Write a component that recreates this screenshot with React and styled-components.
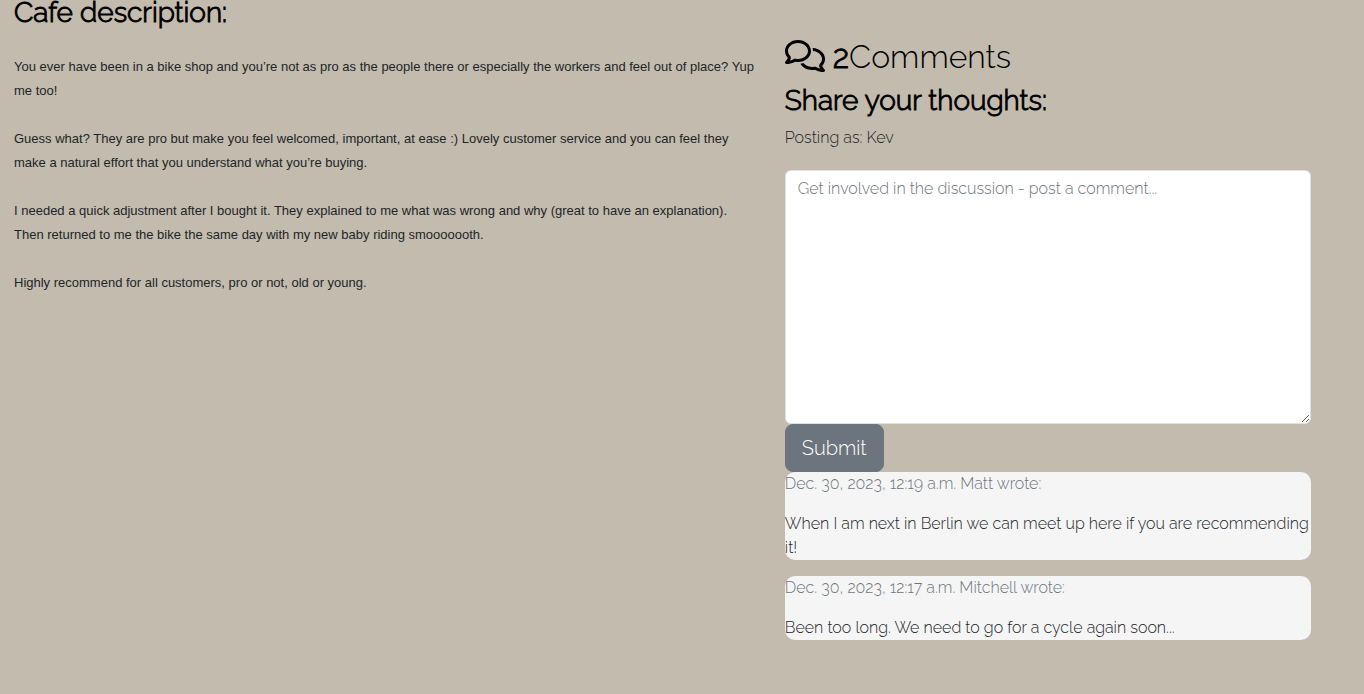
import React from "react";
import styled, { createGlobalStyle } from "styled-components";
import { FaRegComments } from "react-icons/fa6";

const GlobalStyle = createGlobalStyle`
  *, *::before, *::after { box-sizing: border-box; }
  body {
    margin: 0;
    background: #c3bbad;
    color: #212529;
    font-family: Raleway, Lato, "Open Sans", sans-serif;
    font-size: 16px;
    font-weight: 300;
    line-height: 24px;
  }
`;

const Page = styled.main`
  display: grid;
  grid-template-columns: 24fr 17fr;
  column-gap: 28px;
  min-height: 100vh;
  padding: 0 53px 54px 14px;
`;

const Description = styled.section`
  min-width: 0;
`;

const Discussion = styled.section`
  min-width: 0;
  padding-top: 38px;
`;

const Heading = styled.h3`
  margin: 0 0 8px;
  color: #000;
  font-size: 28px;
  font-weight: 300;
  line-height: 34px;
  -webkit-text-stroke: 1px #000;
`;

const DescriptionHeading = styled(Heading)`
  margin: 0 0 29px;
  line-height: 26px;
`;

const Paragraph = styled.p`
  margin: 0 0 24px;
  font-family: "Liberation Sans", Arial, sans-serif;
  font-size: 13px;
  font-weight: 400;
`;

const CommentCount = styled.h2`
  display: flex;
  align-items: center;
  margin: 0 0 8px;
  color: #000;
  font-size: 32px;
  font-weight: 300;
  line-height: 38px;
`;

const CommentsIcon = styled(FaRegComments)`
  width: 40px;
  height: 32px;
  margin: 0 8px 2px 0;
`;

const Count = styled.span`
  -webkit-text-stroke: 1px #000;
`;

const Form = styled.form`
  display: flex;
  flex-direction: column;
  align-items: flex-start;
`;

const PostingAs = styled.label`
  margin-bottom: 20px;
`;

const CommentBox = styled.textarea`
  display: block;
  width: 100%;
  height: 254px;
  padding: 6px 12px;
  border: 1px solid #dee2e6;
  border-radius: 6px;
  background: #fff;
  color: #212529;
  font: inherit;
  resize: vertical;
  &::placeholder { color: #6c757d; opacity: 1; }
`;

const SubmitButton = styled.button`
  padding: 8px 16px;
  border: 1px solid #6c757d;
  border-radius: 8px;
  background: #6c757d;
  color: #fff;
  font: inherit;
  font-size: 20px;
  line-height: 30px;
`;

const Comment = styled.article`
  margin-bottom: 16px;
  border-radius: 10px;
  background: #f5f5f5;
`;

const Meta = styled.p`
  margin: 0 0 16px;
  color: #6c757d;
`;

const Body = styled.p`
  margin: 0;
`;

const paragraphs = [
  "You ever have been in a bike shop and you’re not as pro as the people there or especially the workers and feel out of place? Yup me too!",
  "Guess what? They are pro but make you feel welcomed, important, at ease :) Lovely customer service and you can feel they make a natural effort that you understand what you’re buying.",
  "I needed a quick adjustment after I bought it. They explained to me what was wrong and why (great to have an explanation). Then returned to me the bike the same day with my new baby riding smooooooth.",
  "Highly recommend for all customers, pro or not, old or young.",
];

const comments = [
  {
    date: "Dec. 30, 2023, 12:19 a.m.",
    author: "Matt",
    text: "When I am next in Berlin we can meet up here if you are recommending it!",
  },
  {
    date: "Dec. 30, 2023, 12:17 a.m.",
    author: "Mitchell",
    text: "Been too long. We need to go for a cycle again soon...",
  },
];

export default function App() {
  return (
    <>
      <GlobalStyle />
      <Page>
        <Description>
          <DescriptionHeading>Cafe description:</DescriptionHeading>
          {paragraphs.map((text) => (
            <Paragraph key={text}>{text}</Paragraph>
          ))}
        </Description>
        <Discussion>
          <CommentCount>
            <CommentsIcon aria-hidden="true" />
            <Count>2</Count>Comments
          </CommentCount>
          <Heading>Share your thoughts:</Heading>
          <Form onSubmit={(event) => event.preventDefault()}>
            <PostingAs htmlFor="comment">Posting as: Kev</PostingAs>
            <CommentBox
              id="comment"
              placeholder="Get involved in the discussion - post a comment..."
            />
            <SubmitButton type="submit">Submit</SubmitButton>
          </Form>
          {comments.map(({ date, author, text }) => (
            <Comment key={date}>
              <Meta>{date} {author} wrote:</Meta>
              <Body>{text}</Body>
            </Comment>
          ))}
        </Discussion>
      </Page>
    </>
  );
}
